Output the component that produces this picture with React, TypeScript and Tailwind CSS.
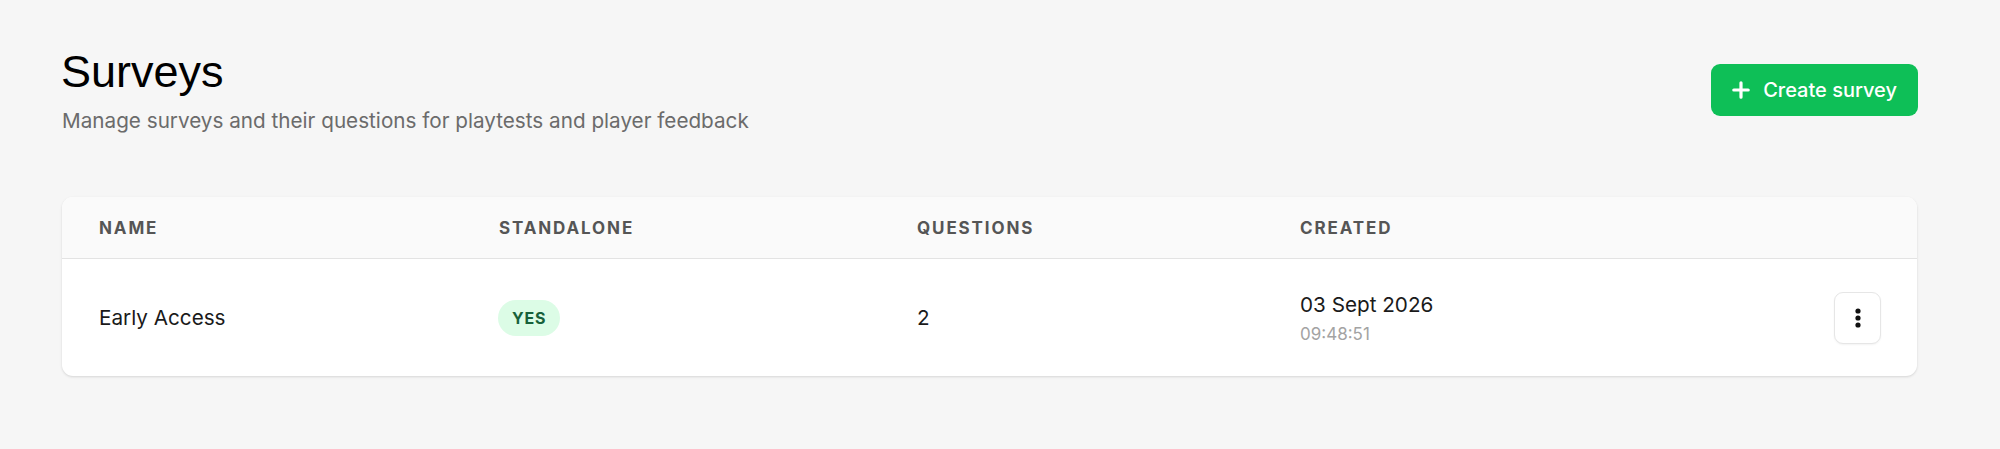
import React from "react";

function Dots() {
  return (
    <svg width="24" height="24" viewBox="0 0 24 24" fill="#111111">
      <circle cx="12" cy="5" r="2.6" />
      <circle cx="12" cy="12" r="2.6" />
      <circle cx="12" cy="19" r="2.6" />
    </svg>
  );
}

function Plus() {
  return (
    <svg width="18" height="18" viewBox="0 0 18 18" fill="none" stroke="#ffffff" strokeWidth="3.2" strokeLinecap="round">
      <path d="M9 1.8v14.4M1.8 9h14.4" />
    </svg>
  );
}

export default function App() {
  return (
    <div
      className="min-h-[449px] w-[2000px] bg-[#f6f6f6] pl-[62px] pr-[83px] pt-[45px] text-[#1a1a1a]"
      style={{ fontFamily: "Inter, 'Noto Sans', sans-serif" }}
    >
      <div className="flex items-center justify-between">
        <div className="flex flex-col">
          <h1
            className="text-[45px] leading-[54px] font-normal text-black ml-[-1px]"
            style={{ fontFamily: "'Liberation Sans', Arial, sans-serif" }}
          >
            Surveys
          </h1>
          <p className="mt-[8px] text-[20.7px] leading-[28px] text-[#6b6b6b]">
            Manage surveys and their questions for playtests and player feedback
          </p>
        </div>
        <button className="mr-[-1px] flex h-[52px] items-center gap-[13px] rounded-[9px] bg-[#0ebf57] pl-[21px] pr-[21px] text-[20px] font-medium text-white">
          <Plus />
          <span>Create survey</span>
        </button>
      </div>

      <div className="mt-[62px] overflow-hidden rounded-[11px] bg-white shadow-[0_1px_3px_rgba(0,0,0,0.10),0_1px_2px_rgba(0,0,0,0.04)]">
        <div className="grid h-[62px] grid-cols-[400px_418px_383px_1fr] items-center border-b border-[#e3e3e3] bg-[#fafafa] pt-[2px] text-[17px] font-bold uppercase tracking-[0.11em] text-[#555555]">
          <div className="pl-[37px]">Name</div>
          <div className="pl-[37px]">Standalone</div>
          <div className="pl-[37px]">Questions</div>
          <div className="pl-[37px]">Created</div>
        </div>
        <div className="grid h-[117px] grid-cols-[400px_418px_383px_1fr_auto] items-center text-[20.7px]">
          <div className="pl-[37px]">Early Access</div>
          <div className="pl-[37px]">
            <span className="ml-[-1px] inline-flex h-[36px] items-center rounded-full bg-[#dcfce6] px-[14px] text-[16px] font-bold tracking-[0.05em] text-[#17613a]">
              YES
            </span>
          </div>
          <div className="pl-[37px]">2</div>
          <div className="flex flex-col pl-[37px]">
            <span className="mt-[2px] text-[20.7px] leading-[26px]">03 Sept 2026</span>
            <span className="mt-[5px] text-[17px] leading-[22px] text-[#a3a3a3]">09:48:51</span>
          </div>
          <div className="pr-[36px]">
            <button className="flex h-[52px] w-[47px] items-center justify-center rounded-[9px] border border-[#e6e6e6] bg-white shadow-[0_1px_2px_rgba(0,0,0,0.05)]">
              <Dots />
            </button>
          </div>
        </div>
      </div>
    </div>
  );
}
